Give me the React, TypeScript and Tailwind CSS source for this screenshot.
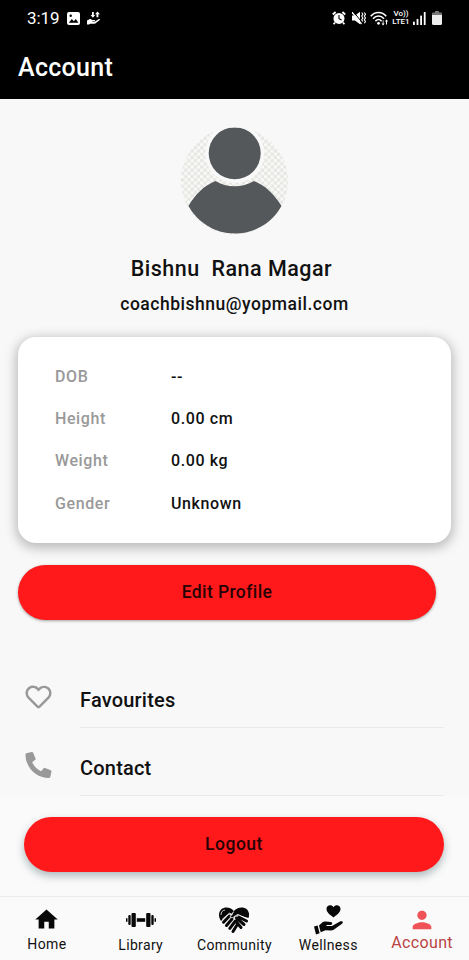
import { FaPhoneAlt, FaRegHeart } from "react-icons/fa";
import { MdHome, MdPerson } from "react-icons/md";

const details = [
  { label: "DOB", value: "--" },
  { label: "Height", value: "0.00 cm" },
  { label: "Weight", value: "0.00 kg" },
  { label: "Gender", value: "Unknown" },
];

const StatusBar = () => {
  return (
    <div className="flex h-9 items-center justify-between pl-[27px] pr-[27px] text-white">
      <div className="flex items-center">
        <span className="w-[40px] text-[17px] leading-9 tracking-[-0.1px]">3:19</span>
        <svg className="h-[13px] w-[13px]" viewBox="0 0 13 13">
          <rect width="13" height="13" rx="2" fill="#fff" />
          <path d="M1.8 10.8 4.8 7l2 2.2L8.8 7l2.6 3.8z" fill="#000" />
          <circle cx="3.7" cy="3.8" r="1.2" fill="#000" />
        </svg>
        <svg className="ml-[7px] h-[14px] w-[14px]" viewBox="0 0 14 14" fill="#fff">
          <path d="M0 9.5 2 8.4c1.3-.7 2.4-.2 3 .5h2.6c.8 0 .8 1.1 0 1.2H5.3v.5h2.8l3.7-2.5c.9-.5 1.6.4.9 1L9 12.1c-.5.4-1 .6-1.7.6H3.2L2 13.4H0z" />
          <path d="M5 1h1.8v3h1.4L5.9 6.8 3.6 4H5zM9.5 6.2V3.3H8L10.5.6 13 3.3h-1.6v2.9z" />
        </svg>
      </div>
      <div className="flex items-center">
        <svg className="h-[14px] w-[14px]" viewBox="0 0 14 14">
          <circle cx="7" cy="7.4" r="5.5" fill="#fff" />
          <path
            d="M.8 3.5 3.6 1M13.2 3.5 10.4 1M3 11.5l-1.4 1.7M11 11.5l1.4 1.7"
            stroke="#fff"
            strokeWidth="1.8"
          />
          <path d="M7 4v3.7l2.6 1.2" stroke="#000" strokeWidth="1.1" fill="none" />
        </svg>
        <svg className="ml-[6px] h-[14px] w-[14px]" viewBox="0 0 14 14">
          <path d="M0 4.5h3L8 .8v12.4L3 9.5H0z" fill="#fff" />
          <path d="M1.3.5 10.5 12" stroke="#000" strokeWidth="1" />
          <path d="M0 1.2 9.5 13" stroke="#fff" strokeWidth="1.3" />
          <path
            d="m9.7 1.5 1.2 1.8-1.2 1.8 1.2 1.8-1.2 1.8 1.2 1.8M12.3 1.5l1.2 1.8-1.2 1.8 1.2 1.8-1.2 1.8 1.2 1.8-1.2 1.8"
            stroke="#fff"
            strokeWidth="1.1"
            fill="none"
          />
        </svg>
        <svg className="ml-[4px] h-[15px] w-[19px]" viewBox="0 0 19 15" fill="none" stroke="#fff">
          <path d="M.8 5.2C5 .2 12 .2 16.2 5.2M3 7.8c3.2-3.7 7.8-3.7 11 0M5.4 10.2c2-2.2 4.2-2.2 6.2 0" strokeWidth="1.6" />
          <circle cx="8.5" cy="12.3" r="1.4" fill="#fff" stroke="none" />
          <path d="M12.7 9.3v3.2h-1.2l1.6 2 1.6-2h-1.2V9.3zM16 13.5v-3h-1.2l1.7-2 1.7 2H17v3z" fill="#fff" stroke="none" />
        </svg>
        <div className="ml-[3px] flex w-[18px] flex-col items-center text-[8px] font-medium">
          <span className="h-[8px] leading-[8px]">Vo))</span>
          <span className="h-[8px] leading-[8px]">LTE1</span>
        </div>
        <svg className="ml-[3px] h-[13px] w-[13px]" viewBox="0 0 13 13" fill="#fff">
          <rect x="0" y="9.7" width="1.8" height="3.3" />
          <rect x="3.6" y="7" width="1.8" height="6" />
          <rect x="7.2" y="3.6" width="1.8" height="9.4" />
          <rect x="10.8" y="0" width="1.8" height="13" />
        </svg>
        <svg className="ml-[6px] h-[14px] w-[10px]" viewBox="0 0 10 14">
          <path d="M3 0h4v1.5h2q1 0 1 1V4H0V2.5q0-1 1-1h2z" fill="#777" />
          <path d="M0 4h10v8.5q0 1.5-1.5 1.5h-7Q0 14 0 12.5z" fill="#eee" />
        </svg>
      </div>
    </div>
  );
};

const Avatar = () => {
  return (
    <svg className="h-[108px] w-[108px]" viewBox="0 0 108 108">
      <defs>
        <pattern id="checks" width="6.4" height="6.4" patternUnits="userSpaceOnUse">
          <rect width="6.4" height="6.4" fill="#f9f9f7" />
          <rect width="3.2" height="3.2" fill="#e6e7e3" />
          <rect x="3.2" y="3.2" width="3.2" height="3.2" fill="#e6e7e3" />
        </pattern>
        <clipPath id="round">
          <circle cx="53.5" cy="54" r="53.5" />
        </clipPath>
      </defs>
      <g clipPath="url(#round)">
        <rect width="108" height="108" fill="url(#checks)" />
        <path d="M7.5 79C14 67.500 23 58.500 34.500 54c11 7 27 7 38.500 0C84.500 58.500 93.500 67.500 100.500 79 92 94.500 75 106.500 54 106.500S16 94.500 7.500 79z" fill="#55585a" />
        <circle cx="53.7" cy="26.500" r="29.5" fill="#f8f9f8" />
        <circle cx="53.7" cy="26.300" r="26" fill="#55585a" />
      </g>
    </svg>
  );
};

const DumbbellIcon = () => {
  return (
    <svg className="h-[16px] w-[30px]" viewBox="0 0 30 16" fill="#080808">
      <rect x="0" y="6" width="1.5" height="4" rx=".7" />
      <rect x="2.3" y="3" width="2.4" height="10" rx="1" />
      <rect x="5.5" y="1" width="4.3" height="14" rx="1" />
      <rect x="10.8" y="6.2" width="8.4" height="3.6" />
      <rect x="20.2" y="1" width="4.3" height="14" rx="1" />
      <rect x="25.3" y="3" width="2.4" height="10" rx="1" />
      <rect x="28.5" y="6" width="1.5" height="4" rx=".7" />
    </svg>
  );
};

const HandshakeHeartIcon = () => {
  return (
    <svg className="h-[28px] w-[32px]" viewBox="0 0 32 28">
      <path
        d="M15.5 4.500C11-.5 1 .5 1 9c0 2 .7 4 2 6L11 7.500l3 1zM15.500 5.500C20-.5 30 0 31 7.500c.2 1.500 0 3-.5 4.500L20 9l-3 1.500c-1.500 2-4 2-4.500.5z"
        fill="#080808"
      />
      <g fill="none" stroke="#080808" strokeWidth="3" strokeLinecap="round">
        <path d="M11.500 10 5.500 16.200M14 13l-5.500 6.500M17 15.500l-5.200 6.800M19 19l-4 6.500" />
        <path d="m21 11 7.500 4M18.500 12l7.500 6.500M17.500 15l5.500 6.500" />
      </g>
      <path
        d="m4 13.500 7.500-6.300 3 1.300M15.500 6l-3.300 4.600c1 1.400 3.300 1.400 5-.8l2.800-1.300 9.500 4.500"
        fill="none"
        stroke="#fafafa"
        strokeWidth=".9"
      />
      <path d="M3 9c0-3 1.500-4.700 4-5" fill="none" stroke="#fafafa" strokeWidth=".8" />
    </svg>
  );
};

const HandHeartIcon = () => {
  return (
    <svg className="h-[30px] w-[29px]" viewBox="0 0 29 30" fill="#080808">
      <path d="M19.5 12.5C16.5 10 12.5 7.5 12.5 4c0-4 5-5 7-1.700C21.5-1 26.5 0 26.5 4c0 3.500-4 6-7 8.500z" />
      <path d="m0 21.5 3.600-1 2 7.800L2 29.5z" />
      <path d="m5 20.5 3.500-3.300c1-.8 2-.9 3.200-.7l5 .6c2.100.3 2 2.700 0 2.900l-4.200.1v.8h5.500l7.500-4.100c2.500-1.200 4.500.2 2.500 1.900L20 24.600c-1 .7-1.700.9-3 .9l-5.500-.3-4.800 2.100z" />
    </svg>
  );
};

const App: React.FC = () => {
  return (
    <div className="flex h-[960px] w-[469px] flex-col bg-[#f8f8f8] font-[Roboto,sans-serif] text-[#111]">
      <header className="h-[99px] shrink-0 bg-black text-white">
        <StatusBar />
        <h1 className="pl-[18px] pt-[15px] text-[25px] font-medium leading-[34px] tracking-[0.3px]">Account</h1>
      </header>

      <main className="flex h-[797px] shrink-0 flex-col">
        <div className="flex flex-col items-center pt-[28px]">
          <Avatar />
          <h2 className="mr-[6px] mt-[20px] whitespace-pre text-[21.5px] font-medium leading-7 tracking-[0.5px]">
            Bishnu  Rana Magar
          </h2>
          <p className="mt-[9px] text-[17.5px] font-medium leading-6 tracking-[0.52px]">coachbishnu@yopmail.com</p>
        </div>

        <section className="mx-[18px] mt-[21px] h-[206px] w-[433px] rounded-[18px] bg-white pl-[37px] pt-[18.5px] shadow-[0_3px_12px_2px_rgba(0,0,0,0.26)]">
          {details.map((item) => (
            <div key={item.label} className="flex h-[42.3px] items-center text-[16px] font-medium tracking-[0.6px]">
              <span className="w-[116px] text-[#999]">{item.label}</span>
              <span>{item.value}</span>
            </div>
          ))}
        </section>

        <button className="ml-[18px] mt-[22px] h-[55px] w-[418px] shrink-0 rounded-full bg-[#ff191b] text-[17.5px] font-medium tracking-[0.4px] text-[#260304] shadow-[0_1px_3px_rgba(0,0,0,0.35)]">
          Edit Profile
        </button>

        <nav className="mt-[40px] pl-[25px] pr-[25px]">
          <div className="flex h-[68px]">
            <FaRegHeart className="mt-[24px] h-[26px] w-[27px] text-[#999]" />
            <div className="ml-[28px] flex-1 border-b border-[#ebebeb] pt-[26px] text-[20px] font-medium leading-7 tracking-[0.2px]">
              Favourites
            </div>
          </div>
          <div className="flex h-[68px]">
            <FaPhoneAlt className="mt-[24px] h-[26px] w-[27px] text-[#999]" />
            <div className="ml-[28px] flex-1 border-b border-[#ebebeb] pt-[26px] text-[20px] font-medium leading-7 tracking-[0.2px]">
              Contact
            </div>
          </div>
        </nav>

        <div className="flex-1 bg-[#fafafa] pl-[24px] pt-[21px]">
          <button className="h-[55px] w-[420px] rounded-full bg-[#ff191b] text-[17.5px] font-medium tracking-[0.5px] text-[#260304] shadow-[0_4px_8px_rgba(30,60,70,0.35)]">
            Logout
          </button>
        </div>
      </main>

      <footer className="grid h-[64px] grid-cols-5 border-t border-[#ececec] bg-[#fafafa] text-[14px] leading-5 tracking-[0.35px]">
        <div className="flex flex-col items-center">
          <MdHome className="mt-[9px] h-[27px] w-[27px] text-[#080808]" />
          <span className="mt-px">Home</span>
        </div>
        <div className="flex flex-col items-center pt-[15px]">
          <DumbbellIcon />
          <span className="mt-[7px]">Library</span>
        </div>
        <div className="flex flex-col items-center pt-[9px]">
          <HandshakeHeartIcon />
          <span className="mt-px">Community</span>
        </div>
        <div className="flex flex-col items-center pt-[8px]">
          <HandHeartIcon />
          <span>Wellness</span>
        </div>
        <div className="flex flex-col items-center text-[#b94443]">
          <MdPerson className="mt-[9px] h-[28px] w-[28px] text-[#ef5358]" />
          <span className="-mt-px text-[16px]">Account</span>
        </div>
      </footer>
    </div>
  );
};

export default App;
